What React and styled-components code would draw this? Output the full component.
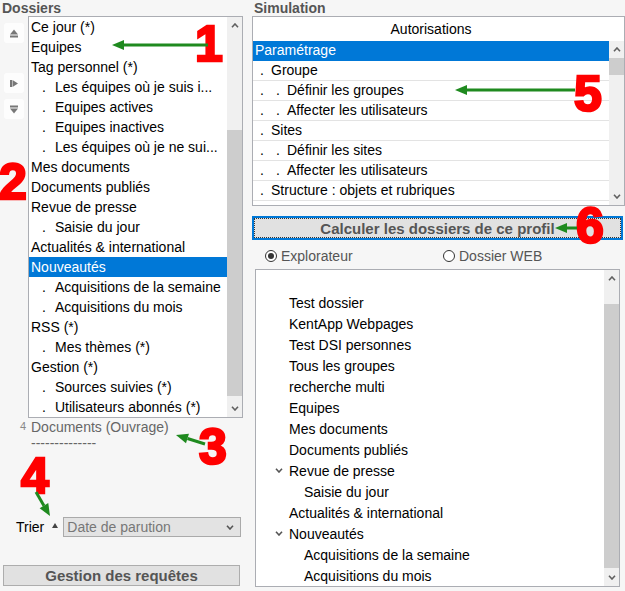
import React from 'react'
import styled, { createGlobalStyle } from 'styled-components'

const GlobalStyle = createGlobalStyle`
  html, body {
    margin:0;
    background:#f6f6f6;
    font-family:"Liberation Sans", Arial, sans-serif;
  }
`

const Page = styled.div`
  position:relative;
  display:grid;
  grid-template-columns:250px 375px;
  width:625px;
  height:591px;
  overflow:hidden;
  font-size:14px;
  color:#000;
`

const Column = styled.div`
  display:flex;
  flex-direction:column;
`

const Title = styled.div`
  height:16px;
  line-height:16px;
  padding-left:${p => p.$pad}px;
  font-weight:bold;
  color:#555;
`

/* ---------- left : dossiers ---------- */

const ListArea = styled.div`
  display:flex;
  align-items:flex-start;
`

const SideTools = styled.div`
  width:20px;
  margin:0 4px;
  padding-top:7px;
  display:flex;
  flex-direction:column;
`

const ToolButton = styled.div`
  width:20px;
  height:20px;
  margin-top:${p => p.$gap || 0}px;
  border-radius:3px;
  background:#fdfdfd;
  display:flex;
  align-items:center;
  justify-content:center;
`

const ListBox = styled.div`
  box-sizing:border-box;
  width:${p => p.$w}px;
  height:${p => p.$h}px;
  margin-left:${p => p.$ml || 0}px;
  margin-top:${p => p.$mt || 0}px;
  border:1px solid #abadb3;
  background:#fff;
  display:flex;
  flex-direction:column;
  flex-shrink:0;
`

const ListBody = styled.div`
  flex:1;
  min-height:0;
  display:flex;
`

const Rows = styled.div`
  flex:1;
  min-width:0;
  overflow:hidden;
  padding-top:${p => p.$pt || 0}px;
`

const FolderRow = styled.div`
  height:20px;
  line-height:20px;
  padding-left:2px;
  white-space:nowrap;
  background:${p => (p.$selected ? '#0078d7' : 'transparent')};
  color:${p => (p.$selected ? '#fff' : '#000')};
`

const Marker = styled.span`
  display:inline-block;
  width:${p => p.$w}px;
  padding-left:${p => p.$pad}px;
  box-sizing:border-box;
`

const Scroll = styled.div`
  width:15px;
  flex-shrink:0;
  background:#f0f0f0;
  display:flex;
  flex-direction:column;
`

const ScrollArrow = styled.div`
  height:17px;
  flex-shrink:0;
  display:flex;
  align-items:center;
  justify-content:center;
`

const Track = styled.div`
  flex:1;
  min-height:0;
`

const Thumb = styled.div`
  margin-top:${p => p.$offset}px;
  height:${p => p.$size}px;
  background:#cdcdcd;
`

const Caption = styled.div`
  height:16px;
  margin-left:20px;
  margin-top:1px;
  line-height:16px;
  color:#666;
  white-space:nowrap;
`

const Count = styled.span`
  display:inline-block;
  width:11px;
  font-size:11px;
  line-height:11px;
  color:#888;
  vertical-align:top;
  margin-top:2px;
`

const Dashes = styled.div`
  height:16px;
  margin-left:31px;
  line-height:16px;
  color:#666;
`

const SortRow = styled.div`
  display:flex;
  align-items:center;
  height:20px;
  margin-top:66px;
  padding-left:16px;
`

const SortLabel = styled.span`
  line-height:20px;
`

const SortArrow = styled.span`
  width:0;
  height:0;
  margin:0 5px 3px 8px;
  border-left:3.5px solid transparent;
  border-right:3.5px solid transparent;
  border-bottom:5px solid #444;
`

const Select = styled.div`
  box-sizing:border-box;
  width:178px;
  height:20px;
  border:1px solid #aaa;
  background:#e3e3e3;
  color:#777;
  display:flex;
  align-items:center;
  justify-content:space-between;
  padding:0 6px 0 3px;
`

const Button = styled.div`
  box-sizing:border-box;
  width:${p => p.$w}px;
  height:${p => p.$h}px;
  margin-left:${p => p.$ml}px;
  margin-top:${p => p.$mt}px;
  background:#e1e1e1;
  border:${p => (p.$focused ? '2px solid #0078d7' : '1px solid #adadad')};
  outline:${p => (p.$focused ? '1px dotted #333' : 'none')};
  outline-offset:-3px;
  color:#555;
  font-size:15px;
  font-weight:bold;
  display:flex;
  align-items:center;
  justify-content:center;
`

/* ---------- right : simulation ---------- */

const AuthHeader = styled.div`
  height:24px;
  line-height:24px;
  flex-shrink:0;
  text-align:center;
  padding-right:15px;
`

const AuthRow = styled.div`
  box-sizing:border-box;
  height:20px;
  line-height:19px;
  padding-left:2px;
  white-space:nowrap;
  border-bottom:1px solid ${p => (p.$selected ? '#0078d7' : '#e3e3e3')};
  background:${p => (p.$selected ? '#0078d7' : 'transparent')};
  color:${p => (p.$selected ? '#fff' : '#000')};
`

const RadioRow = styled.div`
  display:grid;
  grid-template-columns:178px 1fr;
  height:20px;
  margin-top:6px;
  padding-left:15px;
  color:#555;
`

const Radio = styled.label`
  display:flex;
  align-items:center;
  gap:4px;
`

const RadioDot = styled.span`
  box-sizing:border-box;
  width:12px;
  height:12px;
  border-radius:50%;
  border:1px solid #333;
  background:#fff;
  display:flex;
  align-items:center;
  justify-content:center;
  &::after{
    content:'';
    width:6px;
    height:6px;
    border-radius:50%;
    background:${p => (p.$checked ? '#333' : 'transparent')};
  }
`

const TreeRow = styled.div`
  height:21px;
  display:flex;
  align-items:center;
  padding-left:${p => 16 + (p.$level || 0) * 15}px;
  white-space:nowrap;
`

const Toggle = styled.span`
  width:17px;
  flex-shrink:0;
  display:flex;
  align-items:center;
  padding-left:3px;
  box-sizing:border-box;
`

/* ---------- annotations ---------- */

const Callout = styled.div`
  position:absolute;
  left:${p => p.$x}px;
  top:${p => p.$y}px;
  font-size:50px;
  line-height:50px;
  font-weight:bold;
  color:#ff0000;
  -webkit-text-stroke:2.5px #ff0000;
  pointer-events:none;
`

const Overlay = styled.svg`
  position:absolute;
  left:0;
  top:0;
  pointer-events:none;
`

const folders = [
  { label: 'Ce jour (*)' },
  { label: 'Equipes' },
  { label: 'Tag personnel (*)' },
  { label: 'Les équipes où je suis i...', level: 1 },
  { label: 'Equipes actives', level: 1 },
  { label: 'Equipes inactives', level: 1 },
  { label: 'Les équipes où je ne sui...', level: 1 },
  { label: 'Mes documents' },
  { label: 'Documents publiés' },
  { label: 'Revue de presse' },
  { label: 'Saisie du jour', level: 1 },
  { label: 'Actualités & international' },
  { label: 'Nouveautés', selected: true },
  { label: 'Acquisitions de la semaine', level: 1 },
  { label: 'Acquisitions du mois', level: 1 },
  { label: 'RSS (*)' },
  { label: 'Mes thèmes (*)', level: 1 },
  { label: 'Gestion (*)' },
  { label: 'Sources suivies (*)', level: 1 },
  { label: 'Utilisateurs abonnés (*)', level: 1 },
]

const rights = [
  { label: 'Paramétrage', level: 0, selected: true },
  { label: 'Groupe', level: 1 },
  { label: 'Définir les groupes', level: 2 },
  { label: 'Affecter les utilisateurs', level: 2 },
  { label: 'Sites', level: 1 },
  { label: 'Définir les sites', level: 2 },
  { label: 'Affecter les utilisateurs', level: 2 },
  { label: 'Structure : objets et rubriques', level: 1 },
]

const tree = [
  { label: 'Test dossier' },
  { label: 'KentApp Webpages' },
  { label: 'Test DSI personnes' },
  { label: 'Tous les groupes' },
  { label: 'recherche multi' },
  { label: 'Equipes' },
  { label: 'Mes documents' },
  { label: 'Documents publiés' },
  { label: 'Revue de presse', open: true },
  { label: 'Saisie du jour', level: 1 },
  { label: 'Actualités & international' },
  { label: 'Nouveautés', open: true },
  { label: 'Acquisitions de la semaine', level: 1 },
  { label: 'Acquisitions du mois', level: 1 },
]

const arrows = [
  { tip: [112, 45], tail: [208, 45] },
  { tip: [176, 435], tail: [205, 444] },
  { tip: [50, 516], tail: [36, 492] },
  { tip: [455, 90], tail: [575, 90] },
  { tip: [555, 228], tail: [577, 228] },
]

const Chevron = ({ dir = 'down', color = '#606060' }) => (
  <svg width="8" height="5" viewBox="0 0 8 5">
    <polyline
      points={dir === 'up' ? '1,4.2 4,1 7,4.2' : '1,0.8 4,4 7,0.8'}
      fill="none"
      stroke={color}
      strokeWidth="1.6"
    />
  </svg>
)

const ScrollBar = ({ offset, size }) => (
  <Scroll>
    <ScrollArrow><Chevron dir="up" /></ScrollArrow>
    <Track><Thumb $offset={offset} $size={size} /></Track>
    <ScrollArrow><Chevron /></ScrollArrow>
  </Scroll>
)

const Arrow = ({ tip, tail }) => {
  const [tx, ty] = tip
  const [sx, sy] = tail
  const len = Math.hypot(tx - sx, ty - sy)
  const ux = (tx - sx) / len
  const uy = (ty - sy) / len
  const bx = tx - ux * 12
  const by = ty - uy * 12
  const head = `${tx},${ty} ${bx - uy * 5},${by + ux * 5} ${bx + uy * 5},${by - ux * 5}`
  return (
    <g fill="#1f8a1f" stroke="#1f8a1f">
      <line x1={sx} y1={sy} x2={bx} y2={by} strokeWidth="3" />
      <polygon points={head} stroke="none" />
    </g>
  )
}

const App = () => {
  return (
    <>
      <GlobalStyle />
      <Page>
        <Column>
          <Title $pad={2}>Dossiers</Title>
          <ListArea>
            <SideTools>
              <ToolButton>
                <svg width="8" height="9" viewBox="0 0 8 9">
                  <polygon points="0,5.5 4,0.5 8,5.5" fill="#777" />
                  <rect x="0" y="6.5" width="8" height="2" fill="#777" />
                </svg>
              </ToolButton>
              <ToolButton $gap={30}>
                <svg width="8" height="7" viewBox="0 0 8 7">
                  <rect x="0" y="0" width="2" height="7" fill="#777" />
                  <polygon points="2.5,0 8,3.5 2.5,7" fill="#777" />
                </svg>
              </ToolButton>
              <ToolButton $gap={6}>
                <svg width="8" height="9" viewBox="0 0 8 9">
                  <rect x="0" y="0.5" width="8" height="2" fill="#777" />
                  <polygon points="0,3.5 8,3.5 4,8.5" fill="#777" />
                </svg>
              </ToolButton>
            </SideTools>
            <ListBox $w={215} $h={402}>
              <ListBody>
                <Rows>
                  {folders.map((f, i) => (
                    <FolderRow key={i} $selected={f.selected}>
                      {f.level ? <Marker $w={24} $pad={11}>.</Marker> : null}
                      {f.label}
                    </FolderRow>
                  ))}
                </Rows>
                <ScrollBar offset={96} size={266} />
              </ListBody>
            </ListBox>
          </ListArea>
          <Caption><Count>4</Count>Documents (Ouvrage)</Caption>
          <Dashes>--------------</Dashes>
          <SortRow>
            <SortLabel>Trier</SortLabel>
            <SortArrow />
            <Select>
              <span>Date de parution</span>
              <Chevron color="#555" />
            </Select>
          </SortRow>
          <Button $w={237} $h={21} $ml={3} $mt={28}>Gestion des requêtes</Button>
        </Column>

        <Column>
          <Title $pad={4}>Simulation</Title>
          <ListBox $w={373} $h={190} $ml={2}>
            <AuthHeader>Autorisations</AuthHeader>
            <ListBody>
              <Rows>
                {rights.map((r, i) => (
                  <AuthRow key={i} $selected={r.selected}>
                    {Array.from({ length: r.level }).map((_, k) => (
                      <Marker key={k} $w={16} $pad={5}>.</Marker>
                    ))}
                    {r.label}
                  </AuthRow>
                ))}
              </Rows>
              <ScrollBar offset={0} size={17} />
            </ListBody>
          </ListBox>
          <Button $w={371} $h={24} $ml={2} $mt={10} $focused>Calculer les dossiers de ce profil</Button>
          <RadioRow>
            <Radio><RadioDot $checked />Explorateur</Radio>
            <Radio><RadioDot />Dossier WEB</Radio>
          </RadioRow>
          <ListBox $w={365} $h={318} $ml={5} $mt={3}>
            <ListBody>
              <Rows $pt={22}>
                {tree.map((t, i) => (
                  <TreeRow key={i} $level={t.level}>
                    <Toggle>{t.open ? <Chevron color="#555" /> : null}</Toggle>
                    {t.label}
                  </TreeRow>
                ))}
              </Rows>
              <ScrollBar offset={17} size={264} />
            </ListBody>
          </ListBox>
        </Column>

        <Callout $x={195} $y={19}>1</Callout>
        <Callout $x={-1} $y={157}>2</Callout>
        <Callout $x={199} $y={422}>3</Callout>
        <Callout $x={21} $y={451}>4</Callout>
        <Callout $x={574} $y={69}>5</Callout>
        <Callout $x={576} $y={201}>6</Callout>
        <Overlay width="625" height="591" viewBox="0 0 625 591">
          {arrows.map((a, i) => (
            <Arrow key={i} tip={a.tip} tail={a.tail} />
          ))}
        </Overlay>
      </Page>
    </>
  )
}

export default App
